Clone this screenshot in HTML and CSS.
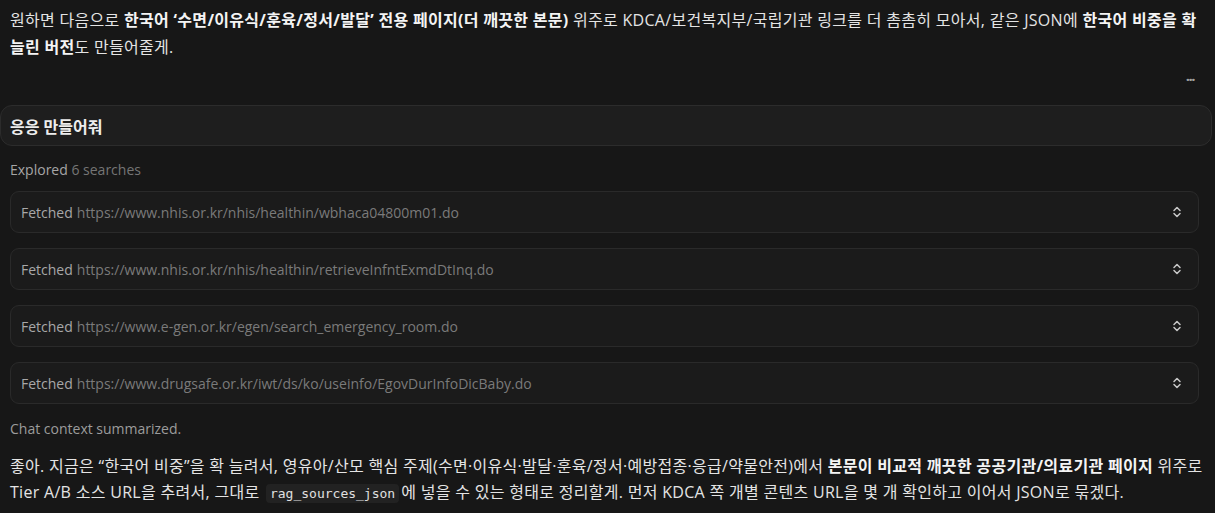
FILE: index.html
```html
<!DOCTYPE html>
<html lang="ko">
<head>
<meta charset="utf-8">
<link rel="stylesheet" href="styles.css">
</head>
<body>
<main class="thread">
  <p class="msg">원하면 다음으로 <b>한국어 ‘수면/이유식/훈육/정서/발달’ 전용 페이지(더 깨끗한 본문)</b> 위주로 KDCA/보건복지부/국립기관 링크를 더 촘촘히 모아서, 같은 JSON에 <b>한국어 비중을 확 늘린 버전</b>도 만들어줄게.</p>
  <div class="more-row"><span class="more">···</span></div>
  <div class="user-bubble">응응 만들어줘</div>
  <div class="explored"><span class="ex-label">Explored</span> <span class="ex-count">6 searches</span></div>
  <div class="fetch-list">
    <div class="fetch"><span class="f-label">Fetched</span> <span class="f-url">https://www.nhis.or.kr/nhis/healthin/wbhaca04800m01.do</span>
      <svg class="chev" viewBox="0 0 12 14" width="12" height="14"><path d="M3 5.5 6 2.5l3 3M3 8.5 6 11.5l3-3" fill="none" stroke="#c8c8c8" stroke-width="1.5" stroke-linecap="round" stroke-linejoin="round"/></svg></div>
    <div class="fetch"><span class="f-label">Fetched</span> <span class="f-url">https://www.nhis.or.kr/nhis/healthin/retrieveInfntExmdDtInq.do</span>
      <svg class="chev" viewBox="0 0 12 14" width="12" height="14"><path d="M3 5.5 6 2.5l3 3M3 8.5 6 11.5l3-3" fill="none" stroke="#c8c8c8" stroke-width="1.5" stroke-linecap="round" stroke-linejoin="round"/></svg></div>
    <div class="fetch"><span class="f-label">Fetched</span> <span class="f-url">https://www.e-gen.or.kr/egen/search_emergency_room.do</span>
      <svg class="chev" viewBox="0 0 12 14" width="12" height="14"><path d="M3 5.5 6 2.5l3 3M3 8.5 6 11.5l3-3" fill="none" stroke="#c8c8c8" stroke-width="1.5" stroke-linecap="round" stroke-linejoin="round"/></svg></div>
    <div class="fetch"><span class="f-label">Fetched</span> <span class="f-url">https://www.drugsafe.or.kr/iwt/ds/ko/useinfo/EgovDurInfoDicBaby.do</span>
      <svg class="chev" viewBox="0 0 12 14" width="12" height="14"><path d="M3 5.5 6 2.5l3 3M3 8.5 6 11.5l3-3" fill="none" stroke="#c8c8c8" stroke-width="1.5" stroke-linecap="round" stroke-linejoin="round"/></svg></div>
  </div>
  <div class="summary">Chat context summarized.</div>
  <p class="msg last">좋아. 지금은 “한국어 비중”을 확 늘려서, 영유아/산모 핵심 주제(수면·이유식·발달·훈육/정서·예방접종·응급/약물안전)에서 <b>본문이 비교적 깨끗한 공공기관/의료기관 페이지</b> 위주로 Tier A/B 소스 URL을 추려서, 그대로 <code>rag_sources_json</code>에 넣을 수 있는 형태로 정리할게. 먼저 KDCA 쪽 개별 콘텐츠 URL을 몇 개 확인하고 이어서 JSON로 묶겠다.</p>
</main>
</body>
</html>
```

FILE: styles.css
```css
html, body {
  margin: 0;
  padding: 0;
  background: #171717;
}
body {
  font-family: "Open Sans", "Noto Sans CJK KR", sans-serif;
  color: #e4e4e4;
  font-size: 16px;
}
.thread {
  padding: 7px 3px 0 10px;
  display: flex;
  flex-direction: column;
}
.msg {
  margin: 0;
  line-height: 27px;
  padding-right: 0;
  letter-spacing: 0.3px;
}
.msg b {
  font-weight: 700;
  color: #f4f4f4;
}
.more-row {
  display: flex;
  justify-content: flex-end;
  padding-right: 18px;
  height: 44px;
  align-items: center;
  box-sizing: border-box;
  padding-bottom: 8px;
}
.more {
  color: #a0a0a0;
  font-size: 15px;
  font-weight: 700;
  letter-spacing: -1.5px;
}
.user-bubble {
  margin-left: -10px;
  height: 41px;
  box-sizing: border-box;
  border: 1px solid #2c2c2c;
  background: #1e1e1e;
  border-radius: 12px;
  padding: 0 9px;
  display: flex;
  align-items: center;
  font-weight: 700;
  color: #ededed;
}
.explored {
  margin-top: 13px;
  font-size: 14px;
  line-height: 22px;
}
.ex-label { color: #a6a6a6; }
.ex-count { color: #757575; }
.fetch-list {
  margin-top: 10px;
  margin-right: 13px;
  display: flex;
  flex-direction: column;
  gap: 15px;
}
.fetch {
  height: 42px;
  box-sizing: border-box;
  border: 1px solid #2a2a2a;
  background: #1b1b1b;
  border-radius: 9px;
  display: flex;
  align-items: center;
  padding: 0 15px 0 10px;
  font-size: 14px;
  gap: 4px;
}
.f-label { color: #a8a8a8; }
.f-url { color: #7a7a7a; flex: 1; }
.chev { flex: none; }
.summary {
  margin-top: 14px;
  font-size: 14px;
  color: #9c9c9c;
  line-height: 22px;
}
.msg.last {
  margin-top: 13px;
  line-height: 26px;
}
code {
  font-family: "DejaVu Sans Mono", monospace;
  font-size: 13px;
  letter-spacing: 0;
  background: #222222;
  border-radius: 4px;
  padding: 2px 4px;
  margin: 0 2px;
  color: #e0e0e0;
}
```
